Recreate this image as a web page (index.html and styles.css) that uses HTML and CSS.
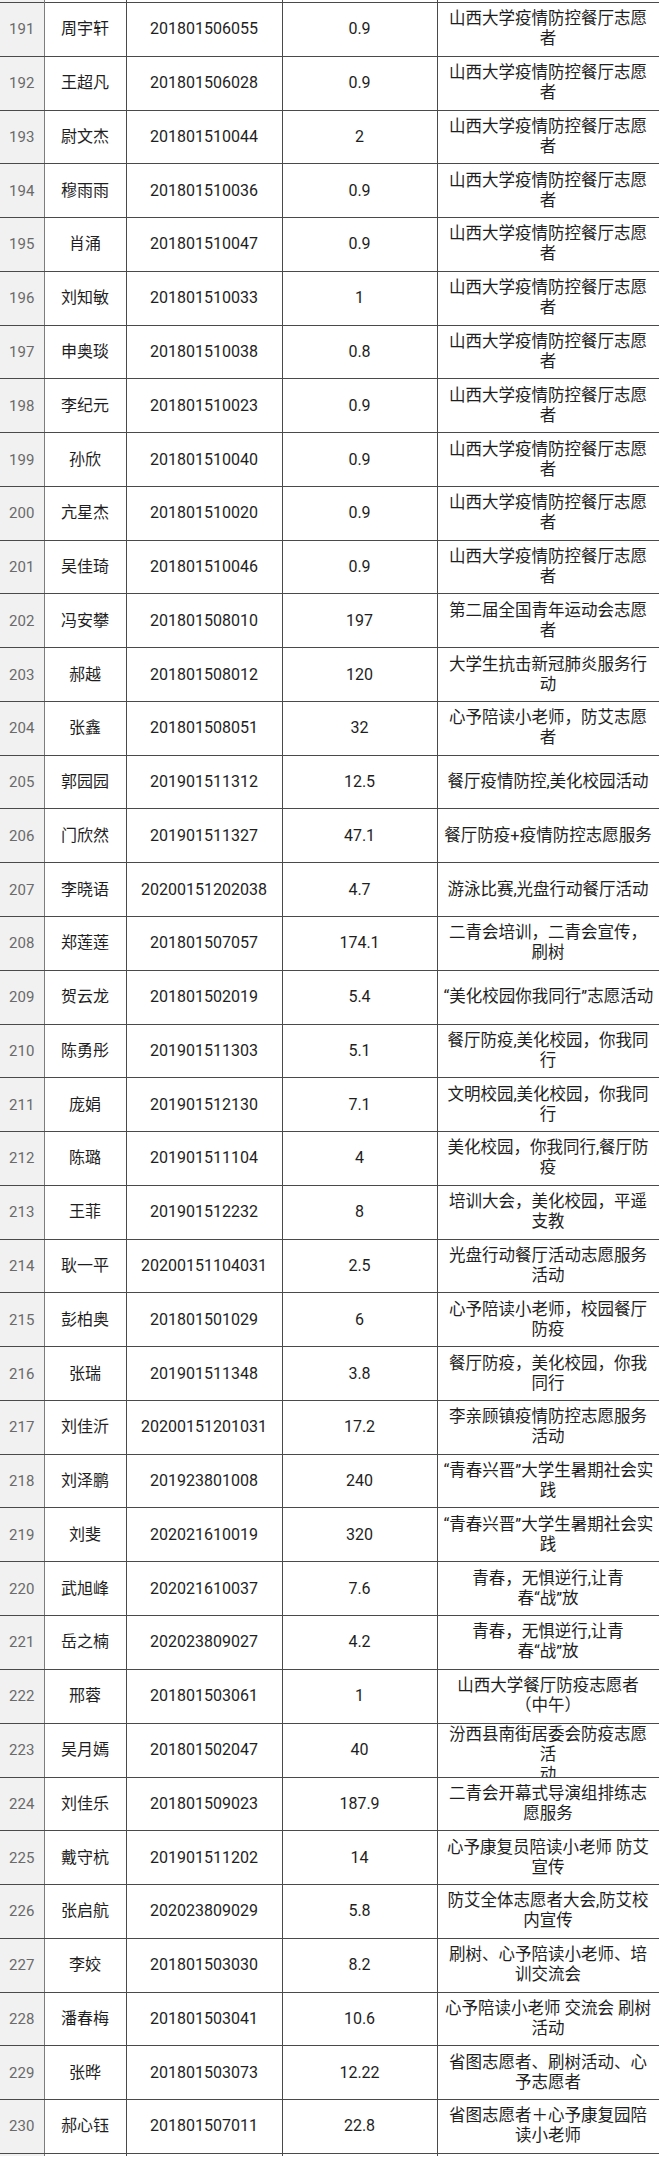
FILE: index.html
```html
<!DOCTYPE html>
<html lang="zh-CN">
<head>
<meta charset="utf-8">
<title>志愿时长表</title>
<link rel="stylesheet" href="styles.css">
</head>
<body>
<table class="sheet">
<colgroup>
<col class="c-idx"><col class="c-name"><col class="c-id"><col class="c-hours"><col class="c-desc">
</colgroup>
<tbody>
<tr class="cut"><td class="idx"></td><td></td><td></td><td></td><td></td></tr>
<tr><td class="idx">191</td><td>周宇轩</td><td>201801506055</td><td>0.9</td><td class="desc">山西大学疫情防控餐厅志愿<br>者</td></tr>
<tr><td class="idx">192</td><td>王超凡</td><td>201801506028</td><td>0.9</td><td class="desc">山西大学疫情防控餐厅志愿<br>者</td></tr>
<tr><td class="idx">193</td><td>尉文杰</td><td>201801510044</td><td>2</td><td class="desc">山西大学疫情防控餐厅志愿<br>者</td></tr>
<tr><td class="idx">194</td><td>穆雨雨</td><td>201801510036</td><td>0.9</td><td class="desc">山西大学疫情防控餐厅志愿<br>者</td></tr>
<tr><td class="idx">195</td><td>肖涌</td><td>201801510047</td><td>0.9</td><td class="desc">山西大学疫情防控餐厅志愿<br>者</td></tr>
<tr><td class="idx">196</td><td>刘知敏</td><td>201801510033</td><td>1</td><td class="desc">山西大学疫情防控餐厅志愿<br>者</td></tr>
<tr><td class="idx">197</td><td>申奥琰</td><td>201801510038</td><td>0.8</td><td class="desc">山西大学疫情防控餐厅志愿<br>者</td></tr>
<tr><td class="idx">198</td><td>李纪元</td><td>201801510023</td><td>0.9</td><td class="desc">山西大学疫情防控餐厅志愿<br>者</td></tr>
<tr><td class="idx">199</td><td>孙欣</td><td>201801510040</td><td>0.9</td><td class="desc">山西大学疫情防控餐厅志愿<br>者</td></tr>
<tr><td class="idx">200</td><td>亢星杰</td><td>201801510020</td><td>0.9</td><td class="desc">山西大学疫情防控餐厅志愿<br>者</td></tr>
<tr><td class="idx">201</td><td>吴佳琦</td><td>201801510046</td><td>0.9</td><td class="desc">山西大学疫情防控餐厅志愿<br>者</td></tr>
<tr><td class="idx">202</td><td>冯安攀</td><td>201801508010</td><td>197</td><td class="desc">第二届全国青年运动会志愿<br>者</td></tr>
<tr><td class="idx">203</td><td>郝越</td><td>201801508012</td><td>120</td><td class="desc">大学生抗击新冠肺炎服务行<br>动</td></tr>
<tr><td class="idx">204</td><td>张鑫</td><td>201801508051</td><td>32</td><td class="desc">心予陪读小老师，防艾志愿<br>者</td></tr>
<tr><td class="idx">205</td><td>郭园园</td><td>201901511312</td><td>12.5</td><td class="desc">餐厅疫情防控,美化校园活动</td></tr>
<tr><td class="idx">206</td><td>门欣然</td><td>201901511327</td><td>47.1</td><td class="desc">餐厅防疫+疫情防控志愿服务</td></tr>
<tr><td class="idx">207</td><td>李晓语</td><td>20200151202038</td><td>4.7</td><td class="desc">游泳比赛,光盘行动餐厅活动</td></tr>
<tr><td class="idx">208</td><td>郑莲莲</td><td>201801507057</td><td>174.1</td><td class="desc">二青会培训，二青会宣传，<br>刷树</td></tr>
<tr><td class="idx">209</td><td>贺云龙</td><td>201801502019</td><td>5.4</td><td class="desc">“美化校园你我同行”志愿活动</td></tr>
<tr><td class="idx">210</td><td>陈勇彤</td><td>201901511303</td><td>5.1</td><td class="desc">餐厅防疫,美化校园，你我同<br>行</td></tr>
<tr><td class="idx">211</td><td>庞娟</td><td>201901512130</td><td>7.1</td><td class="desc">文明校园,美化校园，你我同<br>行</td></tr>
<tr><td class="idx">212</td><td>陈璐</td><td>201901511104</td><td>4</td><td class="desc">美化校园，你我同行,餐厅防<br>疫</td></tr>
<tr><td class="idx">213</td><td>王菲</td><td>201901512232</td><td>8</td><td class="desc">培训大会，美化校园，平遥<br>支教</td></tr>
<tr><td class="idx">214</td><td>耿一平</td><td>20200151104031</td><td>2.5</td><td class="desc">光盘行动餐厅活动志愿服务<br>活动</td></tr>
<tr><td class="idx">215</td><td>彭柏奥</td><td>201801501029</td><td>6</td><td class="desc">心予陪读小老师，校园餐厅<br>防疫</td></tr>
<tr><td class="idx">216</td><td>张瑞</td><td>201901511348</td><td>3.8</td><td class="desc">餐厅防疫，美化校园，你我<br>同行</td></tr>
<tr><td class="idx">217</td><td>刘佳沂</td><td>20200151201031</td><td>17.2</td><td class="desc">李亲顾镇疫情防控志愿服务<br>活动</td></tr>
<tr><td class="idx">218</td><td>刘泽鹏</td><td>201923801008</td><td>240</td><td class="desc">“青春兴晋”大学生暑期社会实<br>践</td></tr>
<tr><td class="idx">219</td><td>刘斐</td><td>202021610019</td><td>320</td><td class="desc">“青春兴晋”大学生暑期社会实<br>践</td></tr>
<tr><td class="idx">220</td><td>武旭峰</td><td>202021610037</td><td>7.6</td><td class="desc">青春，无惧逆行,让青<br>春“战”放</td></tr>
<tr><td class="idx">221</td><td>岳之楠</td><td>202023809027</td><td>4.2</td><td class="desc">青春，无惧逆行,让青<br>春“战”放</td></tr>
<tr><td class="idx">222</td><td>邢蓉</td><td>201801503061</td><td>1</td><td class="desc">山西大学餐厅防疫志愿者<br>（中午）</td></tr>
<tr><td class="idx">223</td><td>吴月嫣</td><td>201801502047</td><td>40</td><td class="desc over"><div class="clip">汾西县南街居委会防疫志愿<br>活<br>动</div></td></tr>
<tr><td class="idx">224</td><td>刘佳乐</td><td>201801509023</td><td>187.9</td><td class="desc">二青会开幕式导演组排练志<br>愿服务</td></tr>
<tr><td class="idx">225</td><td>戴守杭</td><td>201901511202</td><td>14</td><td class="desc">心予康复员陪读小老师 防艾<br>宣传</td></tr>
<tr><td class="idx">226</td><td>张启航</td><td>202023809029</td><td>5.8</td><td class="desc">防艾全体志愿者大会,防艾校<br>内宣传</td></tr>
<tr><td class="idx">227</td><td>李姣</td><td>201801503030</td><td>8.2</td><td class="desc">刷树、心予陪读小老师、培<br>训交流会</td></tr>
<tr><td class="idx">228</td><td>潘春梅</td><td>201801503041</td><td>10.6</td><td class="desc">心予陪读小老师 交流会 刷树<br>活动</td></tr>
<tr><td class="idx">229</td><td>张晔</td><td>201801503073</td><td>12.22</td><td class="desc">省图志愿者、刷树活动、心<br>予志愿者</td></tr>
<tr><td class="idx">230</td><td>郝心钰</td><td>201801507011</td><td>22.8</td><td class="desc">省图志愿者＋心予康复园陪<br>读小老师</td></tr>
<tr class="cut"><td class="idx"></td><td></td><td></td><td></td><td></td></tr>
</tbody>
</table>
</body>
</html>
```

FILE: styles.css
```css
html, body {
  margin: 0;
  padding: 0;
  background: #ffffff;
}

.sheet {
  border-collapse: collapse;
  table-layout: fixed;
  width: 659px;
  font-family: Roboto, "Noto Sans CJK SC", sans-serif;
  font-size: 16px;
  color: #1e1e1e;
}

.c-idx { width: 44px; }
.c-name { width: 82px; }
.c-id { width: 156px; }
.c-hours { width: 155px; }
.c-desc { width: 222px; }

.sheet tr {
  height: 53.78px;
}

.sheet td {
  border: 1px solid #4a4a4a;
  padding: 0;
  text-align: center;
  vertical-align: middle;
  white-space: nowrap;
  overflow: hidden;
  line-height: 20px;
}

.sheet td.idx {
  background: #f1f1f1;
  color: #6a6a6a;
  font-size: 15px;
  border-left: none;
  border-right-color: #7d7d7d;
}

.sheet td.desc {
  font-size: 16.5px;
  padding: 0 6px;
}

.sheet td.over {
  vertical-align: top;
}

.clip {
  height: 52px;
  overflow: hidden;
  padding-top: 1px;
}

.sheet tr.cut {
  height: 2px;
}

.sheet tr.cut td {
  border-top: none;
  border-bottom: none;
  height: 2px;
  line-height: 0;
  font-size: 0;
}
```
